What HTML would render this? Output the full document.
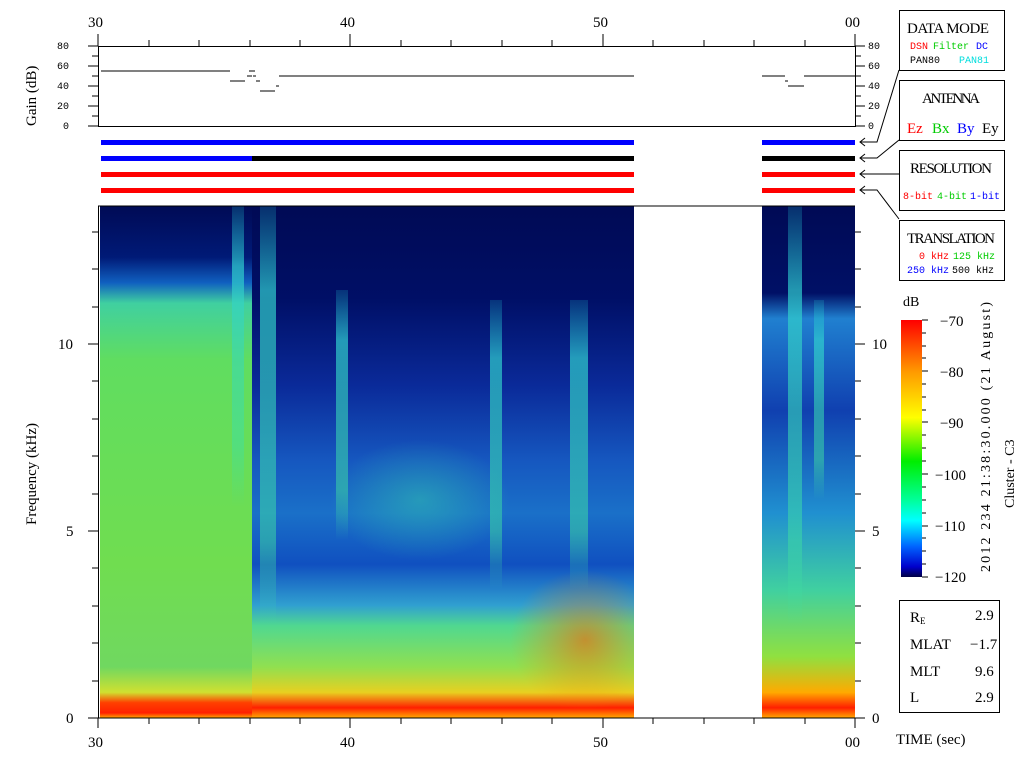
<!DOCTYPE html><html><head><style>
body{margin:0;width:1024px;height:768px;background:#fff;overflow:hidden;position:relative;font-family:"Liberation Serif",serif}
.a{position:absolute}
</style></head><body>
<svg class="a" style="left:0;top:0" width="1024" height="768" xmlns="http://www.w3.org/2000/svg">
<defs>
<clipPath id="cm"><rect x="252" y="206" width="382" height="512"/></clipPath>
<linearGradient id="cb" x1="0" y1="0" x2="0" y2="1">
<stop offset="0" stop-color="#ff0000"/><stop offset=".2" stop-color="#ff9900"/><stop offset=".38" stop-color="#ffff00"/><stop offset=".55" stop-color="#00ee00"/><stop offset=".7" stop-color="#00ff99"/><stop offset=".78" stop-color="#00ffff"/><stop offset=".88" stop-color="#0066ff"/><stop offset=".96" stop-color="#0000cc"/><stop offset="1" stop-color="#000044"/></linearGradient>
<linearGradient id="sL" x1="0" y1="0" x2="0" y2="1">
<stop offset="0" stop-color="#000a55"/><stop offset=".1" stop-color="#001a77"/><stop offset=".15" stop-color="#1060c0"/><stop offset=".19" stop-color="#40d0a0"/><stop offset=".3" stop-color="#60dd60"/><stop offset=".7" stop-color="#70dd50"/><stop offset=".9" stop-color="#70d860"/><stop offset=".95" stop-color="#d0e030"/><stop offset=".97" stop-color="#ff4000"/><stop offset=".99" stop-color="#ff2000"/><stop offset="1" stop-color="#ffaa00"/></linearGradient>
<linearGradient id="sM" x1="0" y1="0" x2="0" y2="1">
<stop offset="0" stop-color="#000a55"/><stop offset=".18" stop-color="#000f66"/><stop offset=".35" stop-color="#0a2a99"/><stop offset=".5" stop-color="#1658c0"/><stop offset=".6" stop-color="#1a70c8"/><stop offset=".7" stop-color="#1050c0"/><stop offset=".78" stop-color="#30a0d0"/><stop offset=".82" stop-color="#50d890"/><stop offset=".9" stop-color="#90e050"/><stop offset=".95" stop-color="#e8d020"/><stop offset=".98" stop-color="#ff2000"/><stop offset="1" stop-color="#ffaa00"/></linearGradient>
<linearGradient id="sR" x1="0" y1="0" x2="0" y2="1">
<stop offset="0" stop-color="#000a55"/><stop offset=".17" stop-color="#001066"/><stop offset=".22" stop-color="#2080d0"/><stop offset=".4" stop-color="#1040b0"/><stop offset=".6" stop-color="#2090d0"/><stop offset=".75" stop-color="#40d0a0"/><stop offset=".88" stop-color="#90e040"/><stop offset=".95" stop-color="#ffaa00"/><stop offset=".98" stop-color="#ff2000"/><stop offset="1" stop-color="#ffaa00"/></linearGradient>
<linearGradient id="st" x1="0" y1="0" x2="0" y2="1">
<stop offset="0" stop-color="#20c0d0" stop-opacity=".2"/><stop offset=".2" stop-color="#30d0d0" stop-opacity=".7"/><stop offset=".8" stop-color="#40e0a0" stop-opacity=".5"/><stop offset="1" stop-color="#40e0a0" stop-opacity="0"/></linearGradient>
<radialGradient id="blob"><stop offset="0" stop-color="#30c0b0" stop-opacity=".55"/><stop offset="1" stop-color="#30c0b0" stop-opacity="0"/></radialGradient>
<radialGradient id="org"><stop offset="0" stop-color="#ff6000" stop-opacity=".6"/><stop offset="1" stop-color="#ff9000" stop-opacity="0"/></radialGradient>
</defs>
<rect x="100" y="206" width="152" height="512" fill="url(#sL)"/>
<rect x="252" y="206" width="382" height="512" fill="url(#sM)"/>
<rect x="762" y="206" width="93" height="512" fill="url(#sR)"/>
<rect x="232" y="206" width="12" height="300" fill="url(#st)"/>
<rect x="260" y="206" width="16" height="420" fill="url(#st)"/>
<rect x="336" y="290" width="12" height="250" fill="url(#st)"/>
<rect x="490" y="300" width="12" height="290" fill="url(#st)"/>
<rect x="570" y="300" width="18" height="290" fill="url(#st)"/>
<g clip-path="url(#cm)">
<ellipse cx="420" cy="500" rx="90" ry="60" fill="url(#blob)"/>
<ellipse cx="585" cy="640" rx="75" ry="70" fill="url(#org)"/>
</g>
<rect x="788" y="206" width="14" height="420" fill="url(#st)"/>
<rect x="814" y="300" width="10" height="200" fill="url(#st)"/>
<g>
<rect x="101" y="140" width="533" height="5" fill="#0000ff"/><rect x="762" y="140" width="93" height="5" fill="#0000ff"/>
<rect x="101" y="156" width="151" height="5" fill="#0000ff"/><rect x="252" y="156" width="382" height="5" fill="#000"/><rect x="762" y="156" width="93" height="5" fill="#000"/>
<rect x="101" y="172" width="533" height="5" fill="#ff0000"/><rect x="762" y="172" width="93" height="5" fill="#ff0000"/>
<rect x="101" y="188" width="533" height="5" fill="#ff0000"/><rect x="762" y="188" width="93" height="5" fill="#ff0000"/>
</g>
<line x1="98" y1="206" x2="855" y2="206" stroke="#000"/>
<g stroke="#000" fill="none" stroke-width="1">
<path d="M98.5 206v512"/>
<rect x="98.5" y="46.5" width="757" height="80"/>
<path d="M98 34v12M149 40v6M199 40v6M250 40v6M300 40v6M350 34v12M401 40v6M451 40v6M502 40v6M552 40v6M603 34v12M653 40v6M704 40v6M754 40v6M805 40v6M855 34v12"/>
<path d="M88 46h10M92 56h6M88 66h10M92 76h6M88 86h10M92 96h6M88 106h10M92 116h6M88 126h10"/>
<path d="M855 46h10M855 56h6M855 66h10M855 76h6M855 86h10M855 96h6M855 106h10M855 116h6M855 126h10"/>
<path d="M101 71h129M230 81h15M247 76h5M249 71h6M253 76h3M256 81h4M260 91h15M276 86h3M279 76h355"/>
<path d="M762 76h23M785 81h3M788 86h16M804 76h51"/>
<path d="M98 718h757"/>
<path d="M98 718v10M149 718v6M199 718v6M250 718v6M300 718v6M350 718v10M401 718v6M451 718v6M502 718v6M552 718v6M603 718v10M653 718v6M704 718v6M754 718v6M805 718v6M855 718v10"/>
<path d="M88 718h10M92 681h6M92 643h6M92 606h6M92 568h6M88 531h10M92 494h6M92 456h6M92 419h6M92 381h6M88 344h10M92 307h6M92 269h6M92 232h6"/>
<path d="M855 718h10M855 681h6M855 643h6M855 606h6M855 568h6M855 531h10M855 494h6M855 456h6M855 419h6M855 381h6M855 344h10M855 307h6M855 269h6M855 232h6"/>
<path d="M922 320h6M922 333h4M922 346h4M922 358h4M922 371h6M922 384h4M922 397h4M922 410h4M922 422h6M922 435h4M922 448h4M922 461h4M922 474h6M922 487h4M922 500h4M922 513h4M922 526h6M922 538h4M922 551h4M922 564h4M922 577h6"/>
<path d="M860 142h17L899 70M860 158h17L899 140M860 174h39M860 190h17L899 219M865 138l-5 4 5 4M865 154l-5 4 5 4M865 170l-5 4 5 4M865 186l-5 4 5 4"/>
<rect x="899.5" y="10.5" width="105" height="60"/>
<rect x="899.5" y="80.5" width="105" height="60"/>
<rect x="899.5" y="150.5" width="105" height="60"/>
<rect x="899.5" y="220.5" width="105" height="60"/>
<rect x="899.5" y="600.5" width="100" height="112"/>
</g>
<rect x="901" y="320" width="21" height="257" fill="url(#cb)"/>
<g font-family="Liberation Serif, serif" font-size="15" fill="#000">
<text x="88" y="27">30</text><text x="340" y="27">40</text><text x="593" y="27">50</text><text x="845" y="27">00</text>
<text x="88" y="747">30</text><text x="340" y="747">40</text><text x="593" y="747">50</text><text x="845" y="747">00</text>
<text x="66" y="723">0</text><text x="66" y="536">5</text><text x="58" y="349">10</text>
<text x="872" y="723">0</text><text x="872" y="536">5</text><text x="872" y="349">10</text>
<text x="903" y="306" font-size="14">dB</text>
<text x="940" y="326">−70</text><text x="940" y="377">−80</text><text x="940" y="428">−90</text><text x="935" y="480">−100</text><text x="935" y="531">−110</text><text x="935" y="582">−120</text>
<text x="896" y="744">TIME (sec)</text>
<text transform="translate(36,126) rotate(-90)">Gain (dB)</text>
<text transform="translate(36,525) rotate(-90)">Frequency (kHz)</text>
<text transform="translate(990,572) rotate(-90)" font-size="14" textLength="270">2012 234 21:38:30.000 (21 August)</text>
<text transform="translate(1014,508) rotate(-90)" font-size="14">Cluster - C3</text>
<text x="907" y="33" font-size="15" textLength="82">DATA MODE</text>
<text x="922" y="103" font-size="15" textLength="58">ANTENNA</text>
<text x="910" y="173" font-size="15" textLength="82">RESOLUTION</text>
<text x="907" y="243" font-size="15" textLength="88">TRANSLATION</text>
<text x="907" y="133" fill="#ff0000">Ez</text><text x="932" y="133" fill="#00cc00">Bx</text><text x="957" y="133" fill="#0000ff">By</text><text x="982" y="133">Ey</text>
<text x="910" y="622">R<tspan font-size="9" dy="2">E</tspan></text><text x="975" y="622" dy="-2">2.9</text>
<text x="910" y="649">MLAT</text><text x="970" y="649">−1.7</text>
<text x="910" y="676">MLT</text><text x="975" y="676">9.6</text>
<text x="910" y="702">L</text><text x="975" y="702">2.9</text>
</g>
<g font-family="Liberation Mono, monospace" font-size="10" fill="#000">
<text x="57" y="49">80</text><text x="57" y="69">60</text><text x="57" y="89">40</text><text x="57" y="109">20</text><text x="63" y="129">0</text>
<text x="868" y="49">80</text><text x="868" y="69">60</text><text x="868" y="89">40</text><text x="868" y="109">20</text><text x="868" y="129">0</text>
<text x="910" y="49" fill="#ff0000">DSN</text><text x="933" y="49" fill="#00cc00">Filter</text><text x="976" y="49" fill="#0000ff">DC</text>
<text x="910" y="63">PAN80</text><text x="959" y="63" fill="#00dddd">PAN81</text>
<text x="903" y="199" fill="#ff0000">8-bit</text><text x="937" y="199" fill="#00cc00">4-bit</text><text x="970" y="199" fill="#0000ff">1-bit</text>
<text x="919" y="259" fill="#ff0000">0 kHz</text><text x="953" y="259" fill="#00cc00">125 kHz</text>
<text x="907" y="273" fill="#0000ff">250 kHz</text><text x="952" y="273">500 kHz</text>
</g>
</svg>
</body></html>
